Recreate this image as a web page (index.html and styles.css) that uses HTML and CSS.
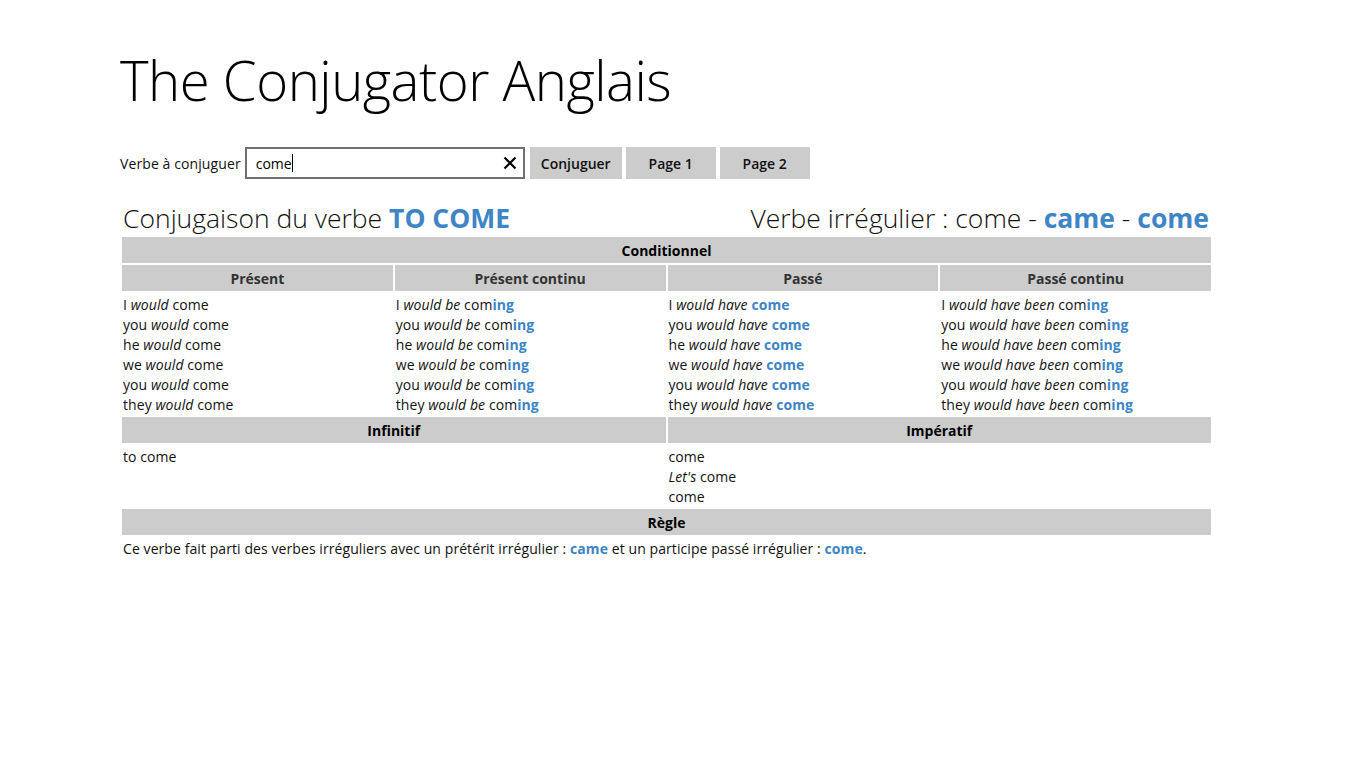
FILE: index.html
```html
<!DOCTYPE html>
<html lang="fr">
<head>
<meta charset="utf-8">
<title>The Conjugator Anglais</title>
<link rel="stylesheet" href="styles.css">
</head>
<body>
<main class="page">
  <h1 class="title">The Conjugator Anglais</h1>

  <div class="search">
    <label class="search-label" for="verb">Verbe à conjuguer</label>
    <div class="input-box">
      <span class="input-text">come<span class="caret"></span></span>
      <svg class="clear" width="14" height="14" viewBox="0 0 14 14"><path d="M1.5 1.5 L12.5 12.5 M12.5 1.5 L1.5 12.5" stroke="#000" stroke-width="2.2" fill="none"/></svg>
    </div>
    <button class="btn">Conjuguer</button>
    <button class="btn">Page 1</button>
    <button class="btn">Page 2</button>
  </div>

  <div class="heading">
    <div class="heading-left">Conjugaison du verbe <b class="blue">TO COME</b></div>
    <div class="heading-right">Verbe irrégulier : come - <b class="blue">came</b> - <b class="blue">come</b></div>
  </div>

  <section class="grid">
    <div class="hd span4 black">Conditionnel</div>
    <div class="hd">Présent</div>
    <div class="hd">Présent continu</div>
    <div class="hd">Passé</div>
    <div class="hd">Passé continu</div>

    <div class="cell">
      <div>I <i>would</i> come</div>
      <div>you <i>would</i> come</div>
      <div>he <i>would</i> come</div>
      <div>we <i>would</i> come</div>
      <div>you <i>would</i> come</div>
      <div>they <i>would</i> come</div>
    </div>
    <div class="cell">
      <div>I <i>would be</i> com<b class="blue">ing</b></div>
      <div>you <i>would be</i> com<b class="blue">ing</b></div>
      <div>he <i>would be</i> com<b class="blue">ing</b></div>
      <div>we <i>would be</i> com<b class="blue">ing</b></div>
      <div>you <i>would be</i> com<b class="blue">ing</b></div>
      <div>they <i>would be</i> com<b class="blue">ing</b></div>
    </div>
    <div class="cell">
      <div>I <i>would have</i> <b class="blue">come</b></div>
      <div>you <i>would have</i> <b class="blue">come</b></div>
      <div>he <i>would have</i> <b class="blue">come</b></div>
      <div>we <i>would have</i> <b class="blue">come</b></div>
      <div>you <i>would have</i> <b class="blue">come</b></div>
      <div>they <i>would have</i> <b class="blue">come</b></div>
    </div>
    <div class="cell">
      <div>I <i>would have been</i> com<b class="blue">ing</b></div>
      <div>you <i>would have been</i> com<b class="blue">ing</b></div>
      <div>he <i>would have been</i> com<b class="blue">ing</b></div>
      <div>we <i>would have been</i> com<b class="blue">ing</b></div>
      <div>you <i>would have been</i> com<b class="blue">ing</b></div>
      <div>they <i>would have been</i> com<b class="blue">ing</b></div>
    </div>

    <div class="hd span2 black">Infinitif</div>
    <div class="hd span2 black">Impératif</div>
    <div class="cell span2">
      <div>to come</div>
    </div>
    <div class="cell span2">
      <div>come</div>
      <div><i>Let's</i> come</div>
      <div>come</div>
    </div>

    <div class="hd span4 black">Règle</div>
    <div class="cell span4">
      <div>Ce verbe fait parti des verbes irréguliers avec un prétérit irrégulier : <b class="blue">came</b> et un participe passé irrégulier : <b class="blue">come</b>.</div>
    </div>
  </section>
</main>
</body>
</html>
```

FILE: styles.css
```css
html, body {
  margin: 0;
  padding: 0;
  background: #fff;
}
body {
  font-family: "Open Sans", "Noto Sans", "Liberation Sans", sans-serif;
  color: #111;
  font-size: 14px;
}
.page {
  padding: 40px 0 0 120px;
  width: 1091px;
}
.title {
  margin: 0;
  font-weight: 300;
  font-size: 54.5px;
  line-height: 80px;
  color: #000;
  letter-spacing: -0.5px;
}
.search {
  display: flex;
  align-items: center;
  margin-top: 27px;
  height: 32px;
}
.search-label {
  font-size: 14px;
  letter-spacing: 0.1px;
  margin-right: 4px;
}
.input-box {
  box-sizing: border-box;
  width: 280px;
  height: 32px;
  border: 2px solid #707070;
  display: flex;
  align-items: center;
  justify-content: space-between;
  padding: 0 6px 0 9px;
  margin-right: 5px;
}
.input-text {
  font-size: 14px;
  color: #000;
  display: inline-flex;
  align-items: center;
}
.caret {
  display: inline-block;
  width: 1px;
  height: 18px;
  background: #000;
}
.btn {
  box-sizing: border-box;
  height: 32px;
  width: 92px;
  margin-right: 4px;
  border: 0;
  background: #cccccc;
  font-family: inherit;
  font-size: 14px;
  font-weight: 600;
  color: #111;
  padding: 0;
}
.btn + .btn { width: 90px; }
.heading {
  display: flex;
  justify-content: space-between;
  align-items: baseline;
  margin-top: 20px;
  padding: 0 2px 0 3px;
  font-weight: 300;
  font-size: 26.5px;
  line-height: 38px;
  color: #111;
}
.heading b { font-weight: 700; }
.blue { color: #3d85c6; font-weight: 700; }
.grid {
  display: grid;
  grid-template-columns: repeat(4, 1fr);
  gap: 2px;
  margin-left: 2px;
  width: 1089px;
}
.hd {
  box-sizing: border-box;
  background: #cccccc;
  height: 26px;
  padding-top: 1px;
  line-height: 26px;
  text-align: center;
  font-weight: 700;
  font-size: 14px;
  color: #333;
}
.hd.black { color: #000; }
.span4 { grid-column: span 4; }
.span2 { grid-column: span 2; }
.cell {
  padding: 2px 0 0 1px;
  line-height: 20px;
  font-size: 14px;
  letter-spacing: 0.08px;
  color: #111;
}
```
